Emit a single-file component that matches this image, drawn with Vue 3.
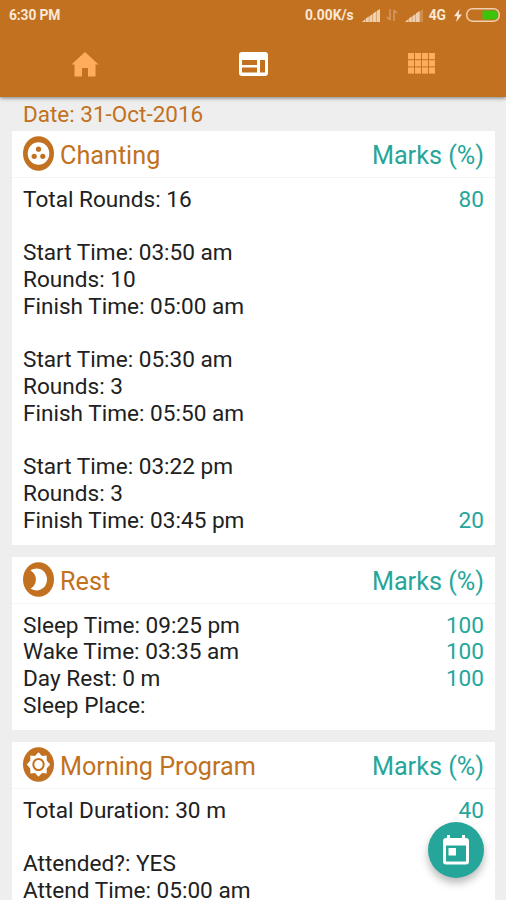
<script setup>
const date = '31-Oct-2016';

const cards = [
  {
    icon: 'beads',
    title: 'Chanting',
    rows: [
      { text: 'Total Rounds: 16', marks: '80' },
      { text: '' },
      { text: 'Start Time: 03:50 am' },
      { text: 'Rounds: 10' },
      { text: 'Finish Time: 05:00 am' },
      { text: '' },
      { text: 'Start Time: 05:30 am' },
      { text: 'Rounds: 3' },
      { text: 'Finish Time: 05:50 am' },
      { text: '' },
      { text: 'Start Time: 03:22 pm' },
      { text: 'Rounds: 3' },
      { text: 'Finish Time: 03:45 pm', marks: '20' }
    ]
  },
  {
    icon: 'moon',
    title: 'Rest',
    rows: [
      { text: 'Sleep Time: 09:25 pm', marks: '100' },
      { text: 'Wake Time: 03:35 am', marks: '100' },
      { text: 'Day Rest: 0 m', marks: '100' },
      { text: 'Sleep Place:' }
    ]
  },
  {
    icon: 'sun',
    title: 'Morning Program',
    rows: [
      { text: 'Total Duration: 30 m', marks: '40' },
      { text: '' },
      { text: 'Attended?: YES' },
      { text: 'Attend Time: 05:00 am' }
    ]
  }
];
</script>

<template>
  <div class="screen">
    <header class="app-bar">
      <div class="status-bar">
        <span class="clock">6:30 PM</span>
        <span class="speed">0.00K/s</span>
        <svg class="signal" width="18" height="13" viewBox="0 0 18 13">
          <path class="dim" d="M0 13L18 0V13Z" />
          <path d="M0 13L3.2 10.2V13ZM3.8 13V9.6L6.8 7.6V13ZM7.4 13V7.2L10.4 5V13ZM11 13V4.6L14 2.6V13ZM14.6 13V2L18 0V13Z" />
        </svg>
        <svg class="transfer" width="12" height="12" viewBox="0 0 12 12">
          <path d="M4 0V11M4 11L1 8M8 12V1M8 1L11 4" />
        </svg>
        <svg class="signal second" width="18" height="13" viewBox="0 0 18 13">
          <path class="dim" d="M0 13L18 0V13Z" />
          <path d="M0 13L3.2 10.2V13ZM3.8 13V9.6L6.8 7.6V13ZM7.4 13V7.2L10.4 5V13ZM11 13V4.6L14.6 2V13Z" />
        </svg>
        <span class="network">4G</span>
        <svg class="bolt" width="8" height="13" viewBox="0 0 8 13">
          <path d="M5.5 0L0 7.3H3.3L2.2 13L8 5.5H4.6Z" />
        </svg>
        <svg class="battery" width="34" height="14" viewBox="0 0 34 14">
          <rect class="shell" x="0.8" y="0.8" width="32.4" height="12.4" rx="5.5" />
          <path class="charge" d="M16.5 2.5H28A3.5 3.5 0 0 1 31.5 6V8A3.5 3.5 0 0 1 28 11.5H16.5Z" />
        </svg>
      </div>

      <nav class="tabs">
        <a class="tab">
          <svg width="28" height="26" viewBox="0 0 28 26">
            <path d="M14 1L0.5 13.5H3.5V25.5H11V17H17V25.5H24.5V13.5H27.5Z" />
          </svg>
        </a>
        <a class="tab active">
          <svg width="29" height="24" viewBox="0 0 29 24">
            <path fill-rule="evenodd" d="M3 0H26A3 3 0 0 1 29 3V21A3 3 0 0 1 26 24H3A3 3 0 0 1 0 21V3A3 3 0 0 1 3 0ZM3 8V13H18V8ZM3 15.5V20.5H18V15.5ZM21 8V20.5H26V8Z" />
          </svg>
        </a>
        <a class="tab">
          <svg width="27" height="21" viewBox="0 0 27 21">
            <template v-for="row in 3" :key="row">
              <rect
                v-for="col in 4"
                :key="col"
                :x="(col - 1) * 7"
                :y="(row - 1) * 7.2"
                width="6"
                height="6.2"
              />
            </template>
          </svg>
        </a>
      </nav>
    </header>

    <main class="content">
      <p class="date">Date: {{ date }}</p>

      <section v-for="card in cards" :key="card.title" class="card">
        <div class="card-header">
          <svg class="card-icon" width="31" height="35" viewBox="0 0 31 35">
            <ellipse class="disc" cx="15.5" cy="17.5" rx="15.5" ry="17.3" />
            <template v-if="card.icon === 'beads'">
              <ellipse class="light" cx="15.5" cy="17.5" rx="10.8" ry="11.3" />
              <circle class="disc" cx="15.5" cy="13.2" r="2.6" />
              <circle class="disc" cx="11.2" cy="20.3" r="2.6" />
              <circle class="disc" cx="19.8" cy="20.3" r="2.6" />
            </template>
            <path
              v-else-if="card.icon === 'moon'"
              class="light"
              d="M7.5 8.4C9.4 7.3 11.4 6.6 13.6 6.6C19.4 6.6 24 11.2 24 17.5S19.4 28.4 13.6 28.4C11.4 28.4 9.4 27.7 7.5 26.6C11 24.8 12.9 21.4 12.9 17.5S11 10.2 7.5 8.4Z"
            />
            <template v-else>
              <path
                class="light"
                d="M15.5 5.2L19 9L23.7 8.6L23.7 13.5L27.2 17.5L23.7 21.5L23.7 26.4L19 26L15.5 29.8L12 26L7.3 26.4L7.3 21.5L3.8 17.5L7.3 13.5L7.3 8.6L12 9Z"
              />
              <ellipse class="ring" cx="15.5" cy="17.5" rx="5.2" ry="5.6" />
            </template>
          </svg>
          <h2>{{ card.title }}</h2>
          <span class="marks-title">Marks (%)</span>
        </div>
        <div class="card-body">
          <div v-for="(row, i) in card.rows" :key="i" class="row">
            <span>{{ row.text }}</span>
            <span v-if="row.marks" class="marks">{{ row.marks }}</span>
          </div>
        </div>
      </section>
    </main>

    <button class="fab" aria-label="Pick date">
      <svg width="26" height="30" viewBox="0 0 26 30">
        <path fill-rule="evenodd" d="M4 0H7V3H19V0H22V3H23A3 3 0 0 1 26 6V26.5A3 3 0 0 1 23 29.5H3A3 3 0 0 1 0 26.5V6A3 3 0 0 1 3 3H4ZM3 10.5V26.5H23V10.5Z" />
        <rect x="5.5" y="13" width="7.5" height="7.5" />
      </svg>
    </button>
  </div>
</template>

<style>
body {
  margin: 0;
  overflow: hidden;
}
</style>

<style scoped>
.screen {
  position: relative;
  height: 900px;
  overflow: hidden;
  display: flex;
  flex-direction: column;
  background: #eeeeee;
  color: #212121;
  font-family: Roboto, "Liberation Sans", sans-serif;
}
.app-bar {
  flex: none;
  height: 97px;
  background: #c17120;
  box-shadow: 0 1px 4px rgba(0, 0, 0, 0.5);
  z-index: 1;
}
.status-bar {
  height: 30px;
  display: flex;
  align-items: center;
  padding: 0 6px 0 9px;
  color: #fbe8d6;
  font-size: 13.8px;
  font-weight: 700;
}
.clock { margin-right: auto; letter-spacing: -0.1px; }
.signal { margin-left: 8px; fill: #f0cfb0; }
.signal.second { margin-left: 7px; }
.dim { opacity: 0.3; }
.transfer {
  margin-left: 6px;
  fill: none;
  stroke: #d69a62;
  stroke-width: 1.6;
}
.network { margin-left: 6px; }
.bolt { margin-left: 8px; fill: #fbe8d6; }
.battery { margin-left: 4px; }
.shell {
  fill: none;
  stroke: #f0cfb0;
  stroke-width: 1.5;
}
.charge { fill: #3cc40a; }
.tabs {
  height: 67px;
  display: flex;
  padding-left: 1px;
}
.tab {
  flex: 1;
  display: flex;
  align-items: center;
  justify-content: center;
  fill: #ffad5c;
}
.tab.active { fill: #fff; }
.content {
  flex: 1;
  min-height: 0;
  padding: 4px 11px 0 12px;
}
.date {
  margin: 0;
  padding-left: 11px;
  height: 30px;
  line-height: 26px;
  font-size: 22.5px;
  color: #c17120;
}
.card {
  margin-bottom: 11.7px;
  padding-bottom: 10.5px;
  background: #fff;
}
.card-header {
  display: flex;
  align-items: center;
  height: 46px;
  padding: 0 11px;
  border-bottom: 1px solid #f5f5f5;
  font-size: 25.2px;
}
.card-icon { margin-bottom: 1px; }
.card-header h2 {
  margin: 3px 0 0 6px;
  font-size: inherit;
  font-weight: 400;
  color: #c17120;
}
.disc { fill: #c17120; }
.light { fill: #fff; }
.ring {
  fill: none;
  stroke: #c17120;
  stroke-width: 2;
}
.marks-title {
  margin: 3px 0 0 auto;
  color: #26a69a;
}
.card-body { padding: 9px 11px 0; }
.row {
  display: flex;
  justify-content: space-between;
  height: 26.73px;
  line-height: 26.73px;
  font-size: 22.6px;
}
.marks { color: #26a69a; }
.fab {
  position: absolute;
  right: 22px;
  bottom: 22px;
  width: 56px;
  height: 56px;
  padding: 0;
  display: flex;
  align-items: center;
  justify-content: center;
  border: none;
  border-radius: 50%;
  background: #26a69a;
  box-shadow: 0 5px 8px rgba(0, 0, 0, 0.28);
  fill: #fff;
}
</style>
